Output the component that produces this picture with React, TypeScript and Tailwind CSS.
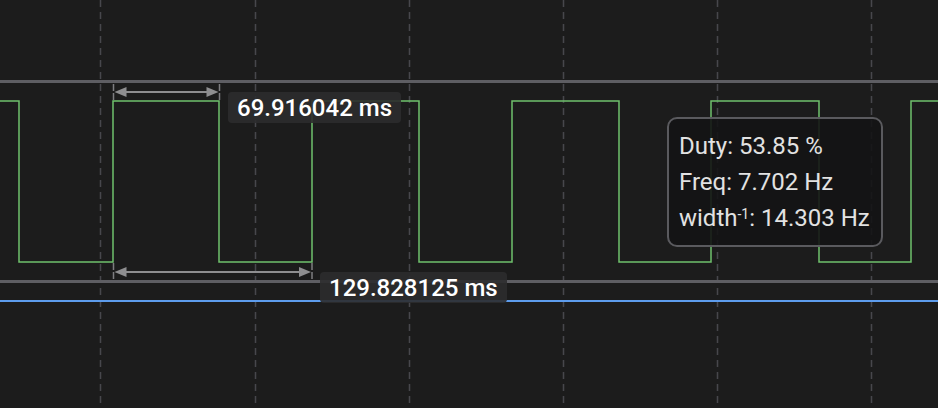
const gridXs = [100.5, 255.5, 409.5, 563.5, 717.5, 871.5];

const wave =
  "M0 101 H19 V262 H113 V101 H219 V262 H312 V101 H419 V262 H512 V101 H619 V262 H711 V101 H819 V262 H911 V101 H938";

function Measure({ x1, x2, y, top, bottom }: { x1: number; x2: number; y: number; top: number; bottom: number }) {
  return (
    <g>
      <line x1={x1} x2={x1} y1={top} y2={bottom} stroke="#7d7d80" strokeWidth={1.5} strokeDasharray="7 2" />
      <line x1={x2} x2={x2} y1={top} y2={bottom} stroke="#7d7d80" strokeWidth={1.5} strokeDasharray="7 2" />
      <line x1={x1 + 8} x2={x2 - 8} y1={y} y2={y} stroke="#8e8e90" strokeWidth={2} />
      <polygon points={`${x1 + 1},${y} ${x1 + 13},${y - 5} ${x1 + 13},${y + 5}`} fill="#8e8e90" />
      <polygon points={`${x2 - 1},${y} ${x2 - 13},${y - 5} ${x2 - 13},${y + 5}`} fill="#8e8e90" />
    </g>
  );
}

export default function App() {
  return (
    <div className="relative h-[408px] w-[938px] overflow-hidden bg-[#1c1c1c] font-['Roboto',sans-serif]">
      <svg width="938" height="408" className="block">
        {gridXs.map((x) => (
          <line key={x} x1={x} x2={x} y1={0} y2={408} stroke="#47474c" strokeWidth={1.5} strokeDasharray="7 5" />
        ))}
        <rect x={0} y={80} width={938} height={3} fill="#5e5e63" />
        <rect x={0} y={280} width={938} height={3} fill="#5e5e63" />
        <rect x={0} y={300} width={938} height={2} fill="#5d9cec" />
        <path d={wave} fill="none" stroke="#6fc16c" strokeWidth={1.5} />
        <Measure x1={113.5} x2={219.5} y={92} top={84} bottom={100} />
        <Measure x1={113.5} x2={312} y={272} top={263} bottom={281} />
      </svg>

      <div className="absolute left-[228px] top-[92px] flex h-[31px] items-center rounded-[4px] bg-[#2c2c2e]/90 px-[9px] text-[24px] leading-none font-medium text-white">
        69.916042 ms
      </div>
      <div className="absolute left-[320px] top-[272px] flex h-[31px] items-center rounded-[4px] bg-[#2c2c2e]/90 px-[9px] text-[24px] leading-none font-medium text-white">
        129.828125 ms
      </div>

      <div className="absolute left-[667px] top-[117px] h-[130px] w-[216px] rounded-[10px] border-2 border-[#5a5a5e] bg-[#141415]/90 pl-[10px] pt-[9px] text-[24px] leading-[36px] text-[#e2e2e2]">
        <div>Duty: 53.85 %</div>
        <div>Freq: 7.702 Hz</div>
        <div>
          width<sup className="text-[14px]">-1</sup>: 14.303 Hz
        </div>
      </div>
    </div>
  );
}
